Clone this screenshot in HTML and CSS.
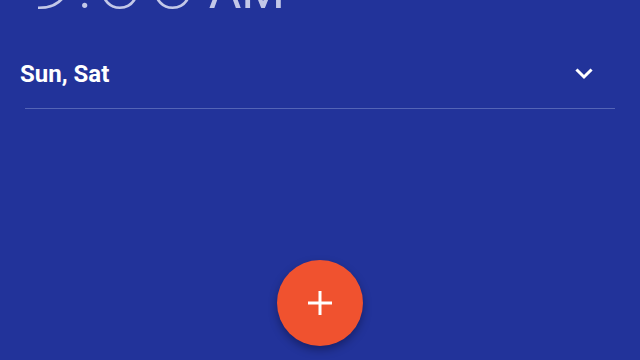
FILE: index.html
```html
<!DOCTYPE html>
<html>
<head>
<meta charset="utf-8">
<link rel="stylesheet" href="styles.css">
</head>
<body>
<div class="screen">
  <div class="time"><span class="clock">9:00</span><span class="ampm">AM</span></div>
  <div class="days-row">
    <span class="days">Sun, Sat</span>
    <svg class="chevron" width="24" height="24" viewBox="0 0 24 24"><path d="M5.5 8.5 L12 15 L18.5 8.5" fill="none" stroke="#fff" stroke-width="3" stroke-linecap="square"/></svg>
  </div>
  <div class="divider"></div>
  <div class="fab-wrap">
    <div class="fab">
      <svg width="26" height="26" viewBox="0 0 26 26"><path d="M13 1 V25 M1 13 H25" stroke="#fff" stroke-width="3"/></svg>
    </div>
  </div>
</div>
</body>
</html>
```

FILE: styles.css
```css
html, body {
  margin: 0;
  padding: 0;
  background: #22339a;
  overflow: hidden;
}
.screen {
  width: 640px;
  height: 360px;
  font-family: Roboto, "Liberation Sans", sans-serif;
  display: flex;
  flex-direction: column;
}
.time {
  display: flex;
  align-items: baseline;
  margin-top: -73px;
  padding-left: 24px;
  line-height: 1;
  color: #c3c8e8;
}
.clock {
  font-size: 96px;
  font-weight: 100;
}
.ampm {
  font-size: 50px;
  font-weight: 400;
  margin-left: 10px;
}
.days-row {
  display: flex;
  align-items: center;
  justify-content: space-between;
  padding: 0 44px 0 20px;
  margin-top: 37px;
  height: 28px;
}
.days {
  color: #fff;
  font-size: 24px;
  font-weight: 700;
}
.chevron {
  display: block;
}
.divider {
  height: 1px;
  margin: 20px 25px 0 25px;
  background: #5464b6;
}
.fab-wrap {
  display: flex;
  justify-content: center;
  margin-top: 151px;
}
.fab {
  width: 86px;
  height: 86px;
  border-radius: 50%;
  background: #f0522f;
  display: flex;
  align-items: center;
  justify-content: center;
  box-shadow: 0 4px 8px rgba(0,0,20,0.35);
}
.fab svg {
  display: block;
}
```
